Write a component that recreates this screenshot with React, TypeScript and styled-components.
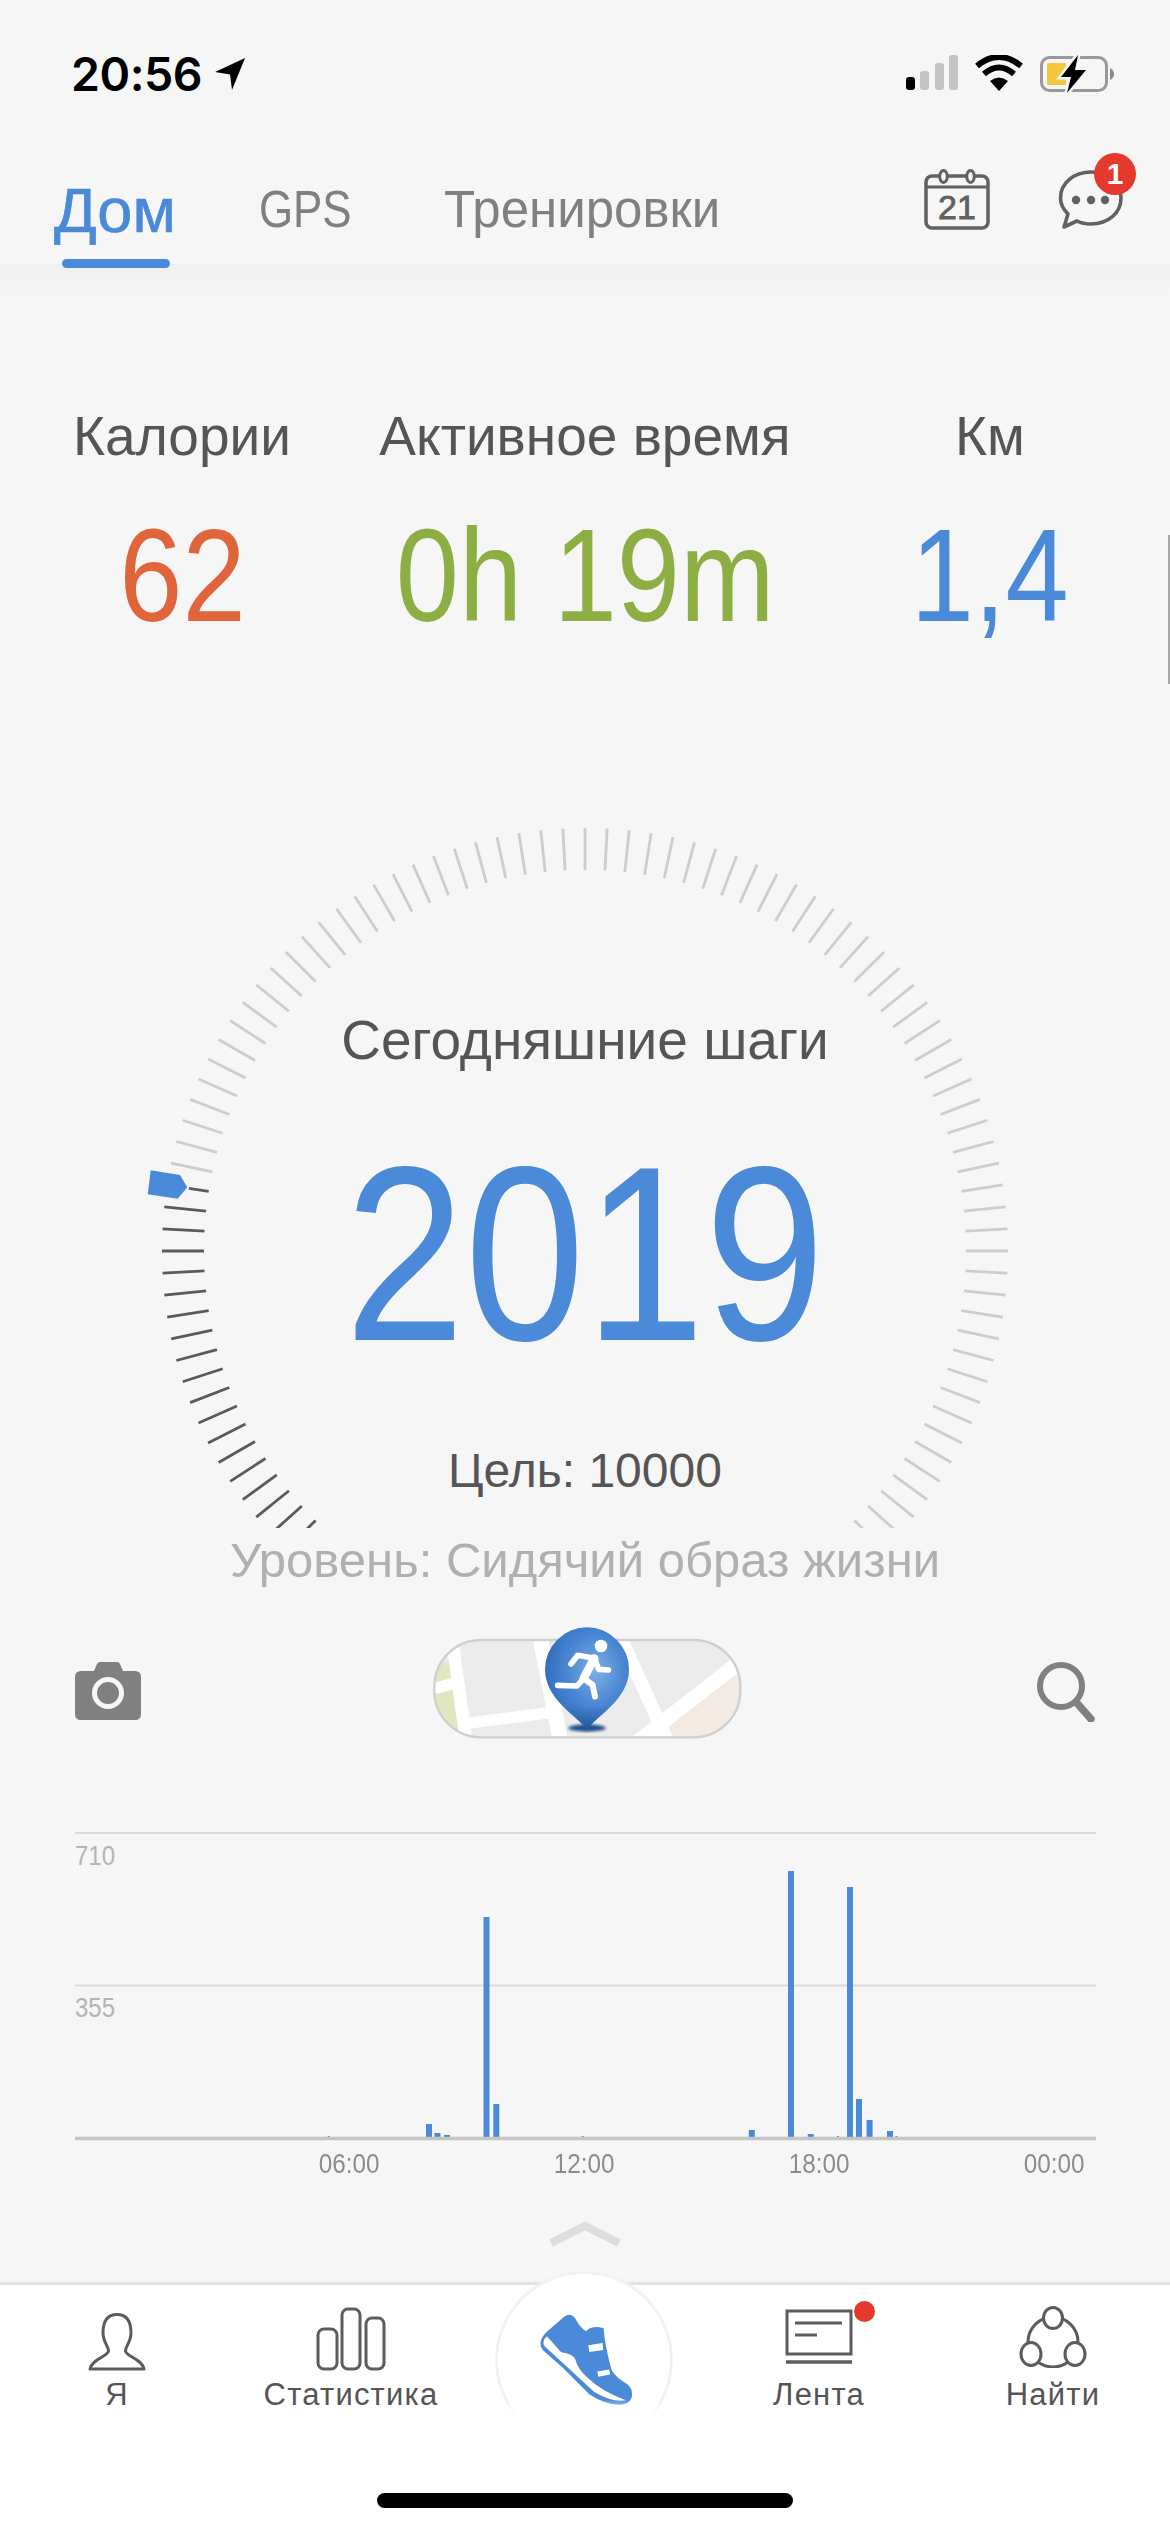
import React from "react";
import styled, { createGlobalStyle } from "styled-components";

const Global = createGlobalStyle`
  html, body { margin: 0; padding: 0; background: #f6f6f6; }
  body { font-family: "Liberation Sans", Arial, sans-serif; }
`;

const Page = styled.div`
  width: 1170px;
  height: 2532px;
  overflow: hidden;
  display: flex;
  flex-direction: column;
  background: #f6f6f6;
`;

const StatusBar = styled.div`
  height: 110px;
  box-sizing: border-box;
  padding: 52px 55px 0 71px;
  display: flex;
  justify-content: space-between;
  align-items: flex-start;
`;
const StatusLeft = styled.div`
  display: flex;
  align-items: center;
  gap: 12px;
`;
const Clock = styled.span`
  font-family: Inter, "Liberation Sans", sans-serif;
  font-weight: 600;
  font-size: 46.5px;
  line-height: 44px;
  color: #000;
  letter-spacing: -0.5px;
`;
const StatusRight = styled.div`
  display: flex;
  align-items: flex-start;
  gap: 17px;
  margin-top: 3px;
`;

const Header = styled.div`
  position: relative;
  height: 154px;
  box-sizing: border-box;
  padding: 70px 47px 0 54px;
  display: flex;
  justify-content: space-between;
  align-items: flex-start;
`;
const Tabs = styled.div`
  display: grid;
  grid-template-columns: 205px 185px auto;
`;
const Tab = styled.span<{ $active?: boolean; $narrow?: boolean }>`
  font-size: ${(p) => (p.$active ? 63 : 51)}px;
  line-height: 60px;
  color: ${(p) => (p.$active ? "#4a8ad8" : "#808080")};
  -webkit-text-stroke: ${(p) => (p.$active ? "0.7px #4a8ad8" : "0")};
  transform: scaleX(${(p) => (p.$narrow ? 0.86 : 1)});
  transform-origin: left center;
  white-space: nowrap;
`;
const Indicator = styled.div`
  position: absolute;
  left: 62px;
  top: 149px;
  width: 108px;
  height: 9px;
  border-radius: 5px;
  background: #4a8ad8;
  z-index: 2;
`;
const HeaderIcons = styled.div`
  display: flex;
  align-items: flex-start;
  gap: 67px;
  margin-top: -12px;
`;
const ChatBox = styled.div`
  position: relative;
  width: 66px;
  height: 64px;
`;
const Badge = styled.span`
  position: absolute;
  left: 37px;
  top: -15px;
  width: 42px;
  height: 42px;
  border-radius: 50%;
  background: #e5392d;
  color: #fff;
  font-size: 30px;
  font-weight: 700;
  line-height: 42px;
  text-align: center;
`;

const Stats = styled.div`
  position: relative;
  height: 564px;
  box-sizing: border-box;
  padding-top: 140px;
  background: linear-gradient(#efefef, #f6f6f6 32px);
  display: grid;
  grid-template-columns: 364px 442px 368px;
  align-content: start;
`;
const ScrollThumb = styled.div`
  position: absolute;
  right: 0;
  top: 271px;
  width: 2px;
  height: 149px;
  background: #a6a6a6;
`;
const Stat = styled.div`
  display: flex;
  flex-direction: column;
  align-items: center;
`;
const StatLabel = styled.span`
  font-size: 55px;
  line-height: 64px;
  color: #555;
  white-space: nowrap;
`;
const StatValue = styled.span<{ $color: string }>`
  font-size: 132px;
  line-height: 140px;
  margin-top: 38px;
  color: ${(p) => p.$color};
  white-space: nowrap;
  transform: scaleX(0.86);
`;

const GaugeArea = styled.div`
  display: grid;
  height: 700px;
  & > * { grid-area: 1 / 1; }
`;
const GaugeDial = styled.svg`
  display: block;
`;
const GaugeText = styled.div`
  display: flex;
  flex-direction: column;
  align-items: center;
  padding-top: 182px;
`;
const GaugeTitle = styled.span`
  font-size: 55px;
  line-height: 60px;
  color: #555;
`;
const GaugeSteps = styled.span`
  font-size: 248px;
  line-height: 250px;
  margin-top: 59px;
  color: #4a8ad8;
  transform: scaleX(0.87);
`;
const GaugeGoal = styled.span`
  font-size: 48px;
  line-height: 56px;
  margin-top: 64px;
  color: #555;
`;

const Level = styled.div`
  height: 82px;
  box-sizing: border-box;
  padding-top: 4px;
  text-align: center;
  font-size: 49px;
  line-height: 56px;
  color: #b0b0b0;
  white-space: nowrap;
`;

const MapRow = styled.div`
  height: 130px;
  box-sizing: border-box;
  padding: 0 74px 0 75px;
  display: flex;
  align-items: flex-start;
  justify-content: space-between;
`;
const RowIcon = styled.div`
  margin-top: 52px;
`;
const PinMap = styled.svg`
  display: block;
  margin-left: -6px;
`;

const ChartSvg = styled.svg`
  display: block;
  margin-top: 90px;
`;
const Axis = styled.div`
  display: flex;
  justify-content: flex-end;
  padding-right: 85px;
  margin-top: 7px;
`;
const AxisLabel = styled.span`
  width: 235.3px;
  box-sizing: border-box;
  display: flex;
  justify-content: flex-end;
  font-size: 27px;
  line-height: 30px;
  color: #8c8c8c;
`;
const AxisText = styled.span`
  display: inline-block;
  transform: scaleX(0.9);
  transform-origin: right center;
`;

const ChevronWrap = styled.div`
  display: flex;
  justify-content: center;
  margin-top: 42px;
  height: 61px;
`;

const TabBar = styled.div`
  position: relative;
  flex: 1;
  background: #fff;
  border-top: 3px solid #e3e3e3;
  display: grid;
  grid-template-columns: repeat(5, 234px);
  align-items: start;
`;
const BarItem = styled.div`
  position: relative;
  display: flex;
  flex-direction: column;
  align-items: center;
`;
const BarIconBox = styled.div<{ $lift?: number }>`
  height: 86px;
  flex: none;
  display: flex;
  align-items: flex-end;
  justify-content: center;
  box-sizing: border-box;
  padding-bottom: ${(p) => p.$lift ?? 0}px;
`;
const BarLabel = styled.span`
  font-size: 31px;
  letter-spacing: 1.2px;
  line-height: 34px;
  color: #555;
  margin-top: 7px;
`;
const Dot = styled.span`
  position: absolute;
  left: 152px;
  top: 16px;
  width: 21px;
  height: 21px;
  border-radius: 50%;
  background: #e5392d;
`;
const CenterCircle = styled.div`
  position: absolute;
  left: 495px;
  top: -14px;
  width: 178px;
  height: 178px;
  box-sizing: border-box;
  border-radius: 50%;
  background: #fff;
  border: 3px solid #f2f2f2;
  padding-left: 4px;
  display: flex;
  align-items: center;
  justify-content: center;
  -webkit-mask-image: linear-gradient(#000 72%, transparent 82%);
  mask-image: linear-gradient(#000 72%, transparent 82%);
`;
const HomeBar = styled.div`
  position: absolute;
  left: 377px;
  top: 208px;
  width: 416px;
  height: 15px;
  border-radius: 8px;
  background: #000;
`;

const Arrow = () => (
  <svg width="32" height="34" viewBox="0 0 32 34">
    <path d="M31 1 L1 15 L16 17.5 L18 33 Z" fill="#000" />
  </svg>
);

const Signal = () => (
  <svg width="52" height="35" viewBox="0 0 52 35">
    <rect x="0" y="22" width="9" height="13" rx="3" fill="#000" />
    <rect x="14" y="16" width="9" height="19" rx="3" fill="#c4c4c4" />
    <rect x="29" y="8" width="9" height="27" rx="3" fill="#c4c4c4" />
    <rect x="43" y="0" width="9" height="35" rx="3" fill="#c4c4c4" />
  </svg>
);

const Wifi = () => (
  <svg width="48" height="36" viewBox="0 0 48 36">
    <path d="M24 36 L15 26 Q24 19 33 26 Z" fill="#000" />
    <path d="M9 19 Q24 6 39 19" fill="none" stroke="#000" strokeWidth="6" strokeLinejoin="round" />
    <path d="M2 11 Q24 -7 46 11" fill="none" stroke="#000" strokeWidth="6" />
  </svg>
);

const Battery = () => (
  <svg width="75" height="38" viewBox="0 0 75 38">
    <rect x="1.5" y="2.5" width="65" height="33" rx="8" fill="none" stroke="#999" strokeWidth="3" />
    <path d="M70 13 Q74 15 74 19 Q74 23 70 25 Z" fill="#888" />
    <path d="M8 8 H26 V30 H8 Q7 30 7 29 V9 Q7 8 8 8 Z" fill="#f4c63d" />
    <path d="M38 0 L21 22 H31 L27 38 L46 15 H35 Z" fill="#f6f6f6" stroke="#f6f6f6" strokeWidth="5" />
    <path d="M38 0 L21 22 H31 L27 38 L46 15 H35 Z" fill="#000" />
  </svg>
);

const CalendarIcon = () => (
  <svg width="66" height="64" viewBox="0 0 66 64">
    <rect x="2" y="8" width="62" height="52" rx="6" fill="none" stroke="#616161" strokeWidth="3.5" />
    <line x1="2" y1="19" x2="64" y2="19" stroke="#616161" strokeWidth="3" />
    <ellipse cx="19.5" cy="8.5" rx="3.8" ry="6" fill="#f6f6f6" stroke="#616161" strokeWidth="3" />
    <ellipse cx="46.5" cy="8.5" rx="3.8" ry="6" fill="#f6f6f6" stroke="#616161" strokeWidth="3" />
    <text x="33" y="51" textAnchor="middle" fontFamily="Liberation Sans" fontSize="34" stroke="#616161" strokeWidth="0.8" fill="#616161">21</text>
  </svg>
);

const ChatIcon = () => (
  <svg width="66" height="64" viewBox="0 0 66 64">
    <path
      d="M34 4 C51 4 64 15 64 30 C64 45 51 56 34 56 C29 56 24 55 20 53 L7 59 L11 46 C6 41 3.5 36 3.5 30 C3.5 15 17 4 34 4 Z"
      fill="none"
      stroke="#616161"
      strokeWidth="3.6"
      strokeLinejoin="round"
    />
    <circle cx="19" cy="32" r="4.2" fill="#616161" />
    <circle cx="34" cy="32" r="4.2" fill="#616161" />
    <circle cx="48" cy="32" r="4.2" fill="#616161" />
  </svg>
);

const Dial = () => {
  const ticks = Array.from({ length: 120 }, (_, i) => {
    const deg = i * 3;
    const rad = (deg * Math.PI) / 180;
    const c = Math.cos(rad);
    const s = Math.sin(rad);
    const dark = deg >= 90 && deg <= 189;
    const marked = deg === 189;
    const inner = 381;
    const outer = marked ? 401 : 423;
    return (
      <line
        key={i}
        x1={585 + inner * c}
        y1={423 + inner * s}
        x2={585 + outer * c}
        y2={423 + outer * s}
        stroke={dark ? "#5a5a5a" : "#cdcdcd"}
        strokeWidth={2.8}
      />
    );
  });
  return (
    <GaugeDial width="1170" height="700" viewBox="0 0 1170 700">
      {ticks}
      <path d="M150.7 342.3 L180 347 L187.3 359.3 L177.7 370.7 L147.7 366.3 Z" fill="#4a8ad8" />
    </GaugeDial>
  );
};

const CameraIcon = () => (
  <svg width="66" height="58" viewBox="0 0 66 58">
    <path
      d="M6 9 H19 L22 2 Q23 0 25 0 H42 Q44 0 45 2 L48 9 H60 Q66 9 66 15 V52 Q66 58 60 58 H6 Q0 58 0 52 V15 Q0 9 6 9 Z"
      fill="#808080"
    />
    <circle cx="33" cy="31" r="13.5" fill="none" stroke="#f6f6f6" strokeWidth="5" />
  </svg>
);

const SearchIcon = () => (
  <svg width="60" height="60" viewBox="0 0 60 60">
    <circle cx="25" cy="24" r="21" fill="none" stroke="#808080" strokeWidth="6" />
    <line x1="40" y1="40" x2="55" y2="57" stroke="#808080" strokeWidth="7.5" strokeLinecap="round" />
  </svg>
);

const MapPill = () => (
  <PinMap width="330" height="130" viewBox="0 0 990 390">
    <defs>
      <clipPath id="pillClip">
        <rect x="40" y="90" width="918" height="292" rx="140" />
      </clipPath>
      <radialGradient id="pinFill" cx="60%" cy="42%" r="62%">
        <stop offset="0%" stopColor="#7fb0e6" />
        <stop offset="55%" stopColor="#4a86d2" />
        <stop offset="100%" stopColor="#2f6cbd" />
      </radialGradient>
      <linearGradient id="pinShade" x1="0" y1="0" x2="0" y2="1">
        <stop offset="0%" stopColor="#2f5f9f" stopOpacity="0" />
        <stop offset="100%" stopColor="#1f4f90" stopOpacity="0.8" />
      </linearGradient>
      <filter id="pinBlur">
        <feGaussianBlur stdDeviation="5" />
      </filter>
    </defs>
    <g clipPath="url(#pillClip)">
      <rect x="40" y="90" width="918" height="292" fill="#ececec" />
      <path d="M30 150 L85 160 L125 390 L30 390 Z" fill="#e0e6c0" />
      <path d="M930 175 L715 345 L760 390 L970 390 L970 170 Z" fill="#f3ebe3" />
      <path d="M640 385 L700 360 L730 390 Z" fill="#e0e6c0" />
      <g stroke="#fff" fill="none">
        <path d="M95 100 L135 390" strokeWidth="38" />
        <path d="M30 238 L100 220" strokeWidth="34" />
        <path d="M135 340 L410 305" strokeWidth="34" />
        <path d="M358 85 L418 390" strokeWidth="46" />
        <path d="M600 85 L740 395" strokeWidth="40" />
        <path d="M970 145 L650 395" strokeWidth="44" />
      </g>
    </g>
    <rect x="40" y="90" width="918" height="292" rx="140" fill="none" stroke="#cfcfcf" strokeWidth="7" />
    <ellipse cx="498" cy="354" rx="56" ry="11" fill="#1d4f8c" filter="url(#pinBlur)" />
    <path d="M498 360 C470 318 372 270 372 178 A126 126 0 1 1 624 178 C624 270 526 318 498 360 Z" fill="url(#pinFill)" />
    <path d="M498 360 C480 334 450 310 425 285 Q498 305 571 285 C546 310 516 334 498 360 Z" fill="url(#pinShade)" />
    <circle cx="540" cy="108" r="19" fill="#fff" />
    <g stroke="#fff" fill="none" strokeLinecap="round" strokeLinejoin="round">
      <path d="M450 162 L470 136 L520 145 L533 178 L562 180" strokeWidth="17" />
      <path d="M520 145 L488 205" strokeWidth="25" />
      <path d="M488 205 L515 225 L522 260" strokeWidth="18" />
      <path d="M488 205 L468 228 L410 226" strokeWidth="17" />
    </g>
  </PinMap>
);

const bars: [number, number][] = [
  [330.7, 2136], [429, 2124], [437.4, 2133], [447, 2135], [486.5, 1917], [496.3, 2104],
  [584.7, 2136], [751.8, 2130], [791, 1871], [810.7, 2134], [840, 2136], [850, 1887],
  [859, 2099], [869.6, 2120], [890, 2131], [898.4, 2136],
];

const Chart = () => (
  <ChartSvg width="1170" height="312" viewBox="0 1830 1170 312">
    <line x1="75" y1="1833" x2="1096" y2="1833" stroke="#dcdcdc" strokeWidth="2" />
    <line x1="75" y1="1985.5" x2="1096" y2="1985.5" stroke="#dcdcdc" strokeWidth="2" />
    {bars.map(([x, top]) => (
      <rect key={x} x={x - 3} y={top} width={top >= 2136 ? 2 : 6} height={2138 - top} fill="#4a8ad8" />
    ))}
    <line x1="75" y1="2138.5" x2="1096" y2="2138.5" stroke="#c4c4c4" strokeWidth="3.5" />
    <text x="75" y="1865" fontFamily="Liberation Sans" fontSize="28" fill="#b4b4b4" textLength="40" lengthAdjust="spacingAndGlyphs">710</text>
    <text x="75" y="2017" fontFamily="Liberation Sans" fontSize="28" fill="#b4b4b4" textLength="40" lengthAdjust="spacingAndGlyphs">355</text>
  </ChartSvg>
);

const Chevron = () => (
  <svg width="76" height="26" viewBox="0 0 76 26">
    <path d="M4 22 L38 5 L72 22" fill="none" stroke="#dddddd" strokeWidth="8" />
  </svg>
);

const PersonIcon = () => (
  <svg width="58" height="58" viewBox="0 0 58 58">
    <path
      d="M29 1.5 C18 1.5 15 10 15 20 C15 29 20.5 33 20.5 38 C20.5 43 4 46 2 56 L56 56 C54 46 37.5 43 37.5 38 C37.5 33 43 29 43 20 C43 10 40 1.5 29 1.5 Z"
      fill="none"
      stroke="#5c5c5c"
      strokeWidth="3"
      strokeLinejoin="round"
    />
  </svg>
);

const StatsIcon = () => (
  <svg width="70" height="64" viewBox="0 0 70 64">
    <rect x="2" y="22" width="19" height="40" rx="6" fill="none" stroke="#5c5c5c" strokeWidth="3" />
    <rect x="26" y="2" width="18" height="60" rx="6" fill="none" stroke="#5c5c5c" strokeWidth="3" />
    <rect x="50" y="11" width="18" height="51" rx="6" fill="none" stroke="#5c5c5c" strokeWidth="3" />
  </svg>
);

const ShoeIcon = () => (
  <svg width="96" height="94" viewBox="170 150 290 283">
    <path
      d="M195 208 L250 160 Q268 148 282 165 Q295 192 315 205 Q325 192 350 192 L368 195 Q372 250 392 320 Q400 340 440 365 Q458 380 453 405 Q445 427 415 427 Q370 425 325 395 L245 315 L185 262 Q166 238 195 208 Z"
      fill="#4a8ad8"
    />
    <path d="M197 220 L240 268 Q275 272 283 290 Q290 320 320 345 Q360 385 435 413 Q395 420 340 388 L250 305 L190 250 Q180 235 197 220 Z" fill="#fff" />
    <path d="M322 247 L365 240 L367 261 L325 267 Z" fill="#fff" />
    <path d="M349 326 L385 320 L388 335 L352 342 Z" fill="#fff" />
  </svg>
);

const NewsIcon = () => (
  <svg width="68" height="56" viewBox="0 0 68 56">
    <rect x="2" y="2" width="64" height="43" fill="none" stroke="#5c5c5c" strokeWidth="3" />
    <line x1="10" y1="14" x2="57" y2="14" stroke="#5c5c5c" strokeWidth="3" />
    <line x1="10" y1="26" x2="32" y2="26" stroke="#5c5c5c" strokeWidth="3" />
    <line x1="1" y1="53" x2="67" y2="53" stroke="#5c5c5c" strokeWidth="3.5" />
  </svg>
);

const FindIcon = () => (
  <svg width="68" height="62" viewBox="0 0 68 62">
    <circle cx="34" cy="36" r="25" fill="none" stroke="#5c5c5c" strokeWidth="3" />
    <ellipse cx="34" cy="12" rx="9.5" ry="10.5" fill="#fff" stroke="#5c5c5c" strokeWidth="3" />
    <ellipse cx="12" cy="48" rx="10" ry="11.5" fill="#fff" stroke="#5c5c5c" strokeWidth="3" />
    <ellipse cx="56" cy="48" rx="10" ry="11.5" fill="#fff" stroke="#5c5c5c" strokeWidth="3" />
  </svg>
);

export default function App() {
  return (
    <Page>
      <Global />
      <StatusBar>
        <StatusLeft>
          <Clock>20:56</Clock>
          <Arrow />
        </StatusLeft>
        <StatusRight>
          <Signal />
          <Wifi />
          <Battery />
        </StatusRight>
      </StatusBar>

      <Header>
        <Tabs>
          <Tab $active>Дом</Tab>
          <Tab $narrow>GPS</Tab>
          <Tab>Тренировки</Tab>
        </Tabs>
        <HeaderIcons>
          <CalendarIcon />
          <ChatBox>
            <ChatIcon />
            <Badge>1</Badge>
          </ChatBox>
        </HeaderIcons>
        <Indicator />
      </Header>

      <Stats>
        <Stat>
          <StatLabel>Калории</StatLabel>
          <StatValue $color="#e0653a">62</StatValue>
        </Stat>
        <Stat>
          <StatLabel>Активное время</StatLabel>
          <StatValue $color="#8cae42">0h 19m</StatValue>
        </Stat>
        <Stat>
          <StatLabel>Км</StatLabel>
          <StatValue $color="#4a8ad8">1,4</StatValue>
        </Stat>
        <ScrollThumb />
      </Stats>

      <GaugeArea>
        <Dial />
        <GaugeText>
          <GaugeTitle>Сегодняшние шаги</GaugeTitle>
          <GaugeSteps>2019</GaugeSteps>
          <GaugeGoal>Цель: 10000</GaugeGoal>
        </GaugeText>
      </GaugeArea>

      <Level>Уровень: Сидячий образ жизни</Level>

      <MapRow>
        <RowIcon>
          <CameraIcon />
        </RowIcon>
        <MapPill />
        <RowIcon>
          <SearchIcon />
        </RowIcon>
      </MapRow>

      <Chart />
      <Axis>
        {["06:00", "12:00", "18:00", "00:00"].map((t) => (
          <AxisLabel key={t}>
            <AxisText>{t}</AxisText>
          </AxisLabel>
        ))}
      </Axis>

      <ChevronWrap>
        <Chevron />
      </ChevronWrap>

      <TabBar>
        <BarItem>
          <BarIconBox><PersonIcon /></BarIconBox>
          <BarLabel>Я</BarLabel>
        </BarItem>
        <BarItem>
          <BarIconBox><StatsIcon /></BarIconBox>
          <BarLabel>Статистика</BarLabel>
        </BarItem>
        <BarItem />
        <BarItem>
          <BarIconBox $lift={6}><NewsIcon /></BarIconBox>
          <BarLabel>Лента</BarLabel>
          <Dot />
        </BarItem>
        <BarItem>
          <BarIconBox $lift={3}><FindIcon /></BarIconBox>
          <BarLabel>Найти</BarLabel>
        </BarItem>
        <CenterCircle>
          <ShoeIcon />
        </CenterCircle>
        <HomeBar />
      </TabBar>
    </Page>
  );
}
